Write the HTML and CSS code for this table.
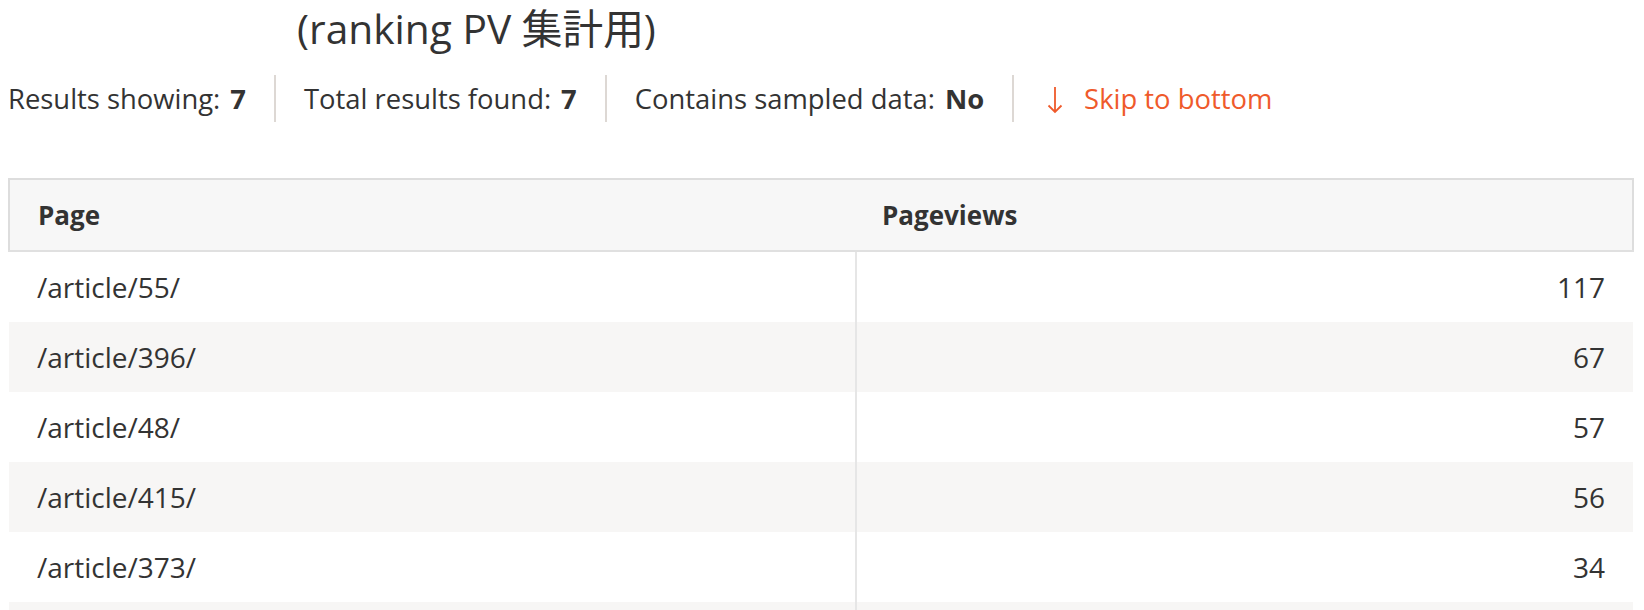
FILE: index.html
```html
<!DOCTYPE html>
<html lang="ja">
<head>
<meta charset="utf-8">
<title>ranking PV</title>
<link rel="stylesheet" href="styles.css">
</head>
<body>
<div class="page">
  <h1 class="title">(ranking PV 集計用)</h1>
  <div class="stats">
    <div class="stat">Results showing:<b class="val">7</b></div>
    <div class="stat">Total results found:<b class="val">7</b></div>
    <div class="stat">Contains sampled data:<b class="val">No</b></div>
    <a class="stat skip" href="#bottom">
      <svg class="arrow" width="16" height="28" viewBox="0 0 16 28" aria-hidden="true">
        <path d="M8 1 V26 M1.5 19.5 L8 26 L14.5 19.5" fill="none" stroke="#ef5a2b" stroke-width="1.8"/>
      </svg>Skip to bottom</a>
  </div>
  <table class="grid">
    <thead>
      <tr><th class="c-page">Page</th><th class="c-pv">Pageviews</th></tr>
    </thead>
    <tbody>
      <tr><td class="c-page">/article/55/</td><td class="c-num">117</td></tr>
      <tr><td class="c-page">/article/396/</td><td class="c-num">67</td></tr>
      <tr><td class="c-page">/article/48/</td><td class="c-num">57</td></tr>
      <tr><td class="c-page">/article/415/</td><td class="c-num">56</td></tr>
      <tr><td class="c-page">/article/373/</td><td class="c-num">34</td></tr>
      <tr><td class="c-page">/article/201/</td><td class="c-num">21</td></tr>
      <tr><td class="c-page">/article/12/</td><td class="c-num">9</td></tr>
    </tbody>
  </table>
  <div id="bottom"></div>
</div>
</body>
</html>
```
FILE: styles.css
```css
html {
  overflow: hidden;
}
body {
  margin: 0;
  background: #ffffff;
  color: #333333;
  font-family: "Open Sans", "Noto Sans CJK JP", sans-serif;
}
.page {
  padding: 0 10px 0 8px;
}
.title {
  margin: 0;
  padding-left: 289px;
  font-size: 40.7px;
  font-weight: 400;
  line-height: 56px;
  color: #333333;
}
.stats {
  display: flex;
  height: 47px;
  margin-top: 19px;
  font-size: 27.4px;
  line-height: 47px;
}
.stat {
  display: flex;
  align-items: center;
  padding: 0 28px;
  border-left: 2px solid #ddd8d4;
  white-space: nowrap;
}
.stat:first-child {
  padding-left: 0;
  border-left: none;
}
.val {
  margin-left: 10px;
  font-weight: 700;
}
.skip {
  color: #ef5a2b;
  text-decoration: none;
}
.arrow {
  margin-left: 5px;
  margin-right: 21px;
  margin-top: 2px;
}
.grid {
  width: 100%;
  margin-top: 56px;
  border-collapse: collapse;
  font-size: 28px;
}
.grid th {
  height: 70px;
  padding: 0 28px;
  background: #f7f7f7;
  border-top: 2px solid #dddddd;
  border-bottom: 2px solid #e0e0e0;
  font-weight: 700;
  font-size: 26px;
  text-align: left;
}
.grid th.c-page {
  border-left: 2px solid #dddddd;
}
.grid th.c-pv {
  padding-left: 26px;
  border-right: 2px solid #dddddd;
}
.grid .c-page {
  width: 790px;
}
.grid td {
  height: 70px;
  padding: 0 28px;
  vertical-align: middle;
}
.grid td.c-page {
  border-right: 2px solid #e6e6e6;
}
.grid td.c-num {
  text-align: right;
}
.grid tbody tr:nth-child(even) td {
  background: #f7f6f5;
}
```
